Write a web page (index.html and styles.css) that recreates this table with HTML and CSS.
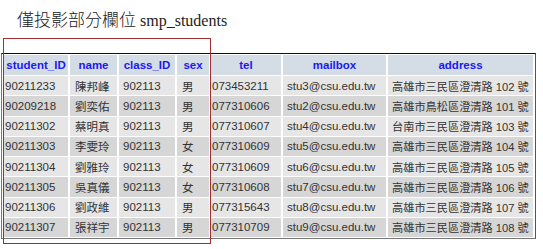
FILE: index.html
```html
<!DOCTYPE html>
<html>
<head>
<meta charset="utf-8">
<link rel="stylesheet" href="styles.css">
</head>
<body>
<div class="page">
  <div class="title"><span class="cjk">僅投影部分欄位</span> smp_students</div>
  <table class="grid">
    <colgroup>
      <col class="c1"><col class="c2"><col class="c3"><col class="c4"><col class="c5"><col class="c6"><col class="c7">
    </colgroup>
    <thead>
      <tr><th>student_ID</th><th>name</th><th>class_ID</th><th>sex</th><th>tel</th><th>mailbox</th><th>address</th></tr>
    </thead>
    <tbody>
      <tr><td class="tight">90211233</td><td class="cn">陳邦峰</td><td>902113</td><td class="cn">男</td><td class="tight">073453211</td><td>stu3@csu.edu.tw</td><td class="addr">高雄市三民區澄清路 102 號</td></tr>
      <tr><td class="tight">90209218</td><td class="cn">劉奕佑</td><td>902113</td><td class="cn">男</td><td class="tight">077310606</td><td>stu2@csu.edu.tw</td><td class="addr">高雄市鳥松區澄清路 101 號</td></tr>
      <tr><td class="tight">90211302</td><td class="cn">蔡明真</td><td>902113</td><td class="cn">男</td><td class="tight">077310607</td><td>stu4@csu.edu.tw</td><td class="addr">台南市三民區澄清路 103 號</td></tr>
      <tr><td class="tight">90211303</td><td class="cn">李雯玲</td><td>902113</td><td class="cn">女</td><td class="tight">077310609</td><td>stu5@csu.edu.tw</td><td class="addr">高雄市三民區澄清路 104 號</td></tr>
      <tr><td class="tight">90211304</td><td class="cn">劉雅玲</td><td>902113</td><td class="cn">女</td><td class="tight">077310609</td><td>stu6@csu.edu.tw</td><td class="addr">高雄市三民區澄清路 105 號</td></tr>
      <tr><td class="tight">90211305</td><td class="cn">吳真儀</td><td>902113</td><td class="cn">女</td><td class="tight">077310608</td><td>stu7@csu.edu.tw</td><td class="addr">高雄市三民區澄清路 106 號</td></tr>
      <tr><td class="tight">90211306</td><td class="cn">劉政維</td><td>902113</td><td class="cn">男</td><td class="tight">077315643</td><td>stu8@csu.edu.tw</td><td class="addr">高雄市三民區澄清路 107 號</td></tr>
      <tr><td class="tight">90211307</td><td class="cn">張祥宇</td><td>902113</td><td class="cn">男</td><td class="tight">077310709</td><td>stu9@csu.edu.tw</td><td class="addr">高雄市三民區澄清路 108 號</td></tr>
    </tbody>
  </table>
  <div class="highlight"></div>
</div>
</body>
</html>
```

FILE: styles.css
```css
html, body {
  margin: 0;
  padding: 0;
  background: #ffffff;
}

.page {
  position: relative;
  width: 543px;
  height: 249px;
  overflow: hidden;
}

.title {
  padding: 7px 0 0 17px;
  height: 24px;
  line-height: 24px;
  font-family: "Liberation Serif", "Noto Sans CJK TC", serif;
  font-size: 16px;
  color: #222222;
}

.title .cjk {
  font-family: "Noto Sans CJK TC", sans-serif;
  font-size: 17px;
  font-weight: 300;
}

.grid {
  margin: 22px 0 0 1px;
  border-collapse: separate;
  border-spacing: 2px 1px;
  border-top: 1px solid #111111;
  border-right: 1px solid #555555;
  border-bottom: 1px solid #777777;
  border-left: 1px solid #777777;
  table-layout: fixed;
  width: 535px;
  font-family: "Liberation Sans", "Noto Sans CJK TC", sans-serif;
  font-size: 11.5px;
}

.c1 { width: 64px; }
.c2 { width: 47px; }
.c3 { width: 56px; }
.c4 { width: 32px; }
.c5 { width: 70px; }
.c6 { width: 103px; }
.c7 { width: 145px; }

.grid th {
  background: #d4dce6;
  color: #1a1aee;
  font-weight: bold;
  font-size: 11.5px;
  height: 20px;
  padding: 0;
  text-align: center;
  white-space: nowrap;
}

.grid td {
  height: 19.25px;
  padding: 0 0 0 4px;
  color: #333333;
  white-space: nowrap;
  overflow: hidden;
}

.grid td.tight {
  padding-left: 1px;
}

.grid td.cn {
  padding-left: 5px;
  font-size: 11.5px;
}

.grid td.addr {
  padding-left: 4px;
  font-size: 11.2px;
}

.grid tbody tr:nth-child(odd) td {
  background: #e6e6e6;
}

.grid tbody tr:nth-child(even) td {
  background: #d6d6d6;
}

.highlight {
  position: absolute;
  left: 3px;
  top: 38px;
  width: 206px;
  height: 204px;
  border: 1px solid #a03030;
}
```
